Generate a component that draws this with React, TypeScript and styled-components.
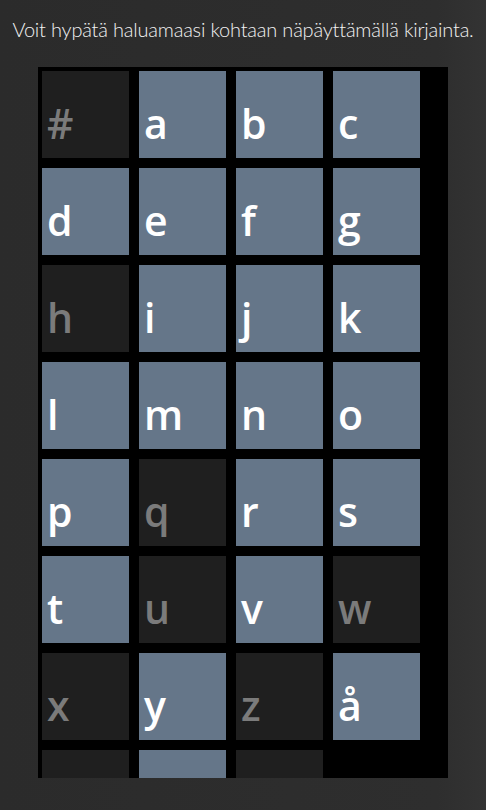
import React from "react";
import styled, { createGlobalStyle } from "styled-components";

const GlobalStyle = createGlobalStyle`
  html, body {
    margin: 0;
    padding: 0;
    background: #2d2d2d;
  }
  body {
    width: 486px;
    height: 810px;
    overflow: hidden;
  }
`;

const Screen = styled.div`
  width: 486px;
  height: 810px;
  background: linear-gradient(90deg, #2b2b2b 0%, #2e2e2e 90%, #333333 100%);
  display: flex;
  flex-direction: column;
`;

const Title = styled.h1`
  margin: 0;
  height: 67px;
  padding-top: 16px;
  box-sizing: border-box;
  font-family: "Lato", "Open Sans", sans-serif;
  font-weight: 300;
  font-size: 20px;
  line-height: 26px;
  color: #f2f2f2;
  text-align: center;
  letter-spacing: -0.2px;
`;

const Panel = styled.div`
  margin-left: 38px;
  width: 410px;
  height: 711px;
  background: #000;
  overflow: hidden;
  box-sizing: border-box;
  padding: 4px 0 0 4px;
`;

const Grid = styled.div`
  display: grid;
  grid-template-columns: repeat(4, 87px);
  grid-auto-rows: 87px;
  gap: 10px;
`;

const Tile = styled.div<{ $active: boolean }>`
  background: ${(p) => (p.$active ? "#657689" : "#1f1f1f")};
  color: ${(p) => (p.$active ? "#ffffff" : "#7b7b7b")};
  font-family: "Open Sans", "Noto Sans", sans-serif;
  font-weight: 600;
  font-size: 41px;
  line-height: 1;
  display: flex;
  align-items: flex-end;
  padding: 0 0 20px 5px;
  box-sizing: border-box;
`;

const Letter = styled.span`
  display: block;
  line-height: 30px;
  height: 30px;
`;

type Key = { label: string; active: boolean };

const keys: Key[] = [
  { label: "#", active: false },
  { label: "a", active: true },
  { label: "b", active: true },
  { label: "c", active: true },
  { label: "d", active: true },
  { label: "e", active: true },
  { label: "f", active: true },
  { label: "g", active: true },
  { label: "h", active: false },
  { label: "i", active: true },
  { label: "j", active: true },
  { label: "k", active: true },
  { label: "l", active: true },
  { label: "m", active: true },
  { label: "n", active: true },
  { label: "o", active: true },
  { label: "p", active: true },
  { label: "q", active: false },
  { label: "r", active: true },
  { label: "s", active: true },
  { label: "t", active: true },
  { label: "u", active: false },
  { label: "v", active: true },
  { label: "w", active: false },
  { label: "x", active: false },
  { label: "y", active: true },
  { label: "z", active: false },
  { label: "å", active: true },
  { label: "ä", active: false },
  { label: "ö", active: true },
  { label: "globe", active: false },
];

// the last row is scrolled below the panel edge, its letters are not visible
const visibleCount = 28;

const App = () => (
  <>
    <GlobalStyle />
    <Screen>
      <Title>Voit hypätä haluamaasi kohtaan näpäyttämällä kirjainta.</Title>
      <Panel>
        <Grid>
          {keys.map(({ label, active }, i) => (
            <Tile key={label} $active={active} aria-label={label}>
              {i < visibleCount && <Letter>{label}</Letter>}
            </Tile>
          ))}
        </Grid>
      </Panel>
    </Screen>
  </>
);

export default App;
